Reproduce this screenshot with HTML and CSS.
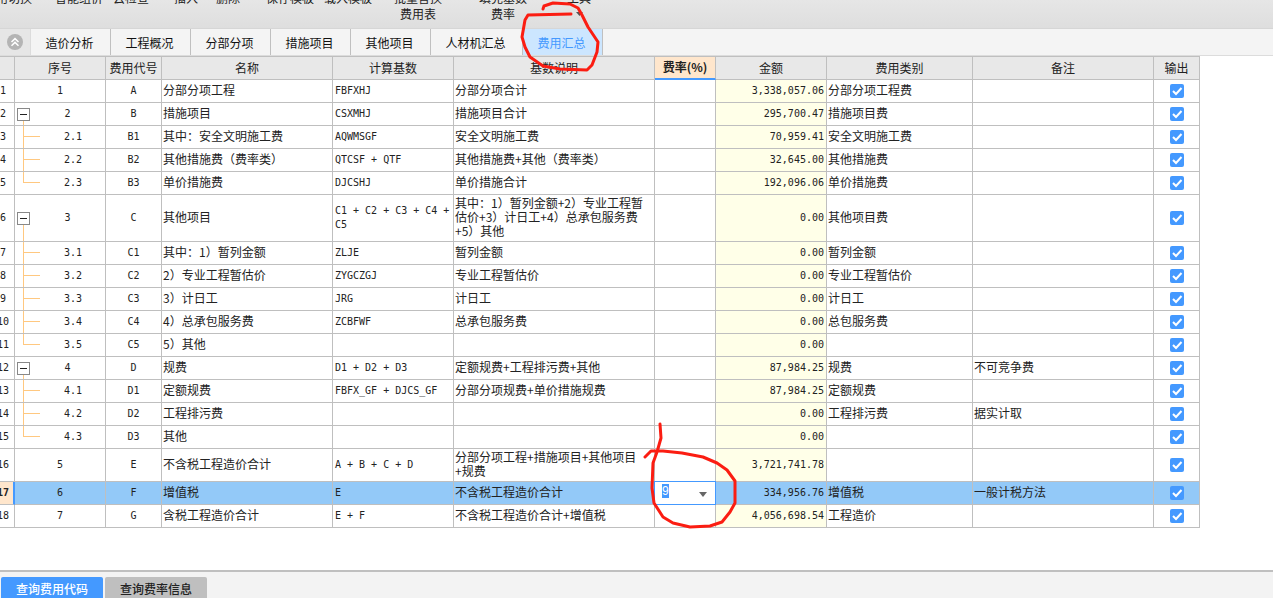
FILE: index.html
```html
<!DOCTYPE html>
<html lang="zh-CN">
<head>
<meta charset="utf-8">
<title>费用汇总</title>
<link rel="stylesheet" href="styles.css">
</head>
<body>
<header class="ribbon">
  <button>费用切换</button>
  <button>智能组价</button>
  <button>云检查</button>
  <button>插入</button>
  <button>删除</button>
  <button>保存模板</button>
  <button>载入模板</button>
  <button>批量替换<br>费用表</button>
  <button>填充基数<br>费率</button>
  <button>工具<br><svg width="7" height="4" viewBox="0 0 7 4"><path d="M0 0h7L3.500 4z" fill="#555"/></svg></button>
</header>
<nav class="tabs">
  <button class="collapse" aria-label="收起">
    <svg width="16" height="16" viewBox="0 0 16 16"><circle cx="8" cy="8" r="8" fill="#b4b4b4"/><path d="M4.500 8L8 4.600 11.500 8M4.500 11.800L8 8.400l3.500 3.400" fill="none" stroke="#fff" stroke-width="1.500"/></svg>
  </button>
  <button>造价分析</button>
  <button>工程概况</button>
  <button>分部分项</button>
  <button>措施项目</button>
  <button>其他项目</button>
  <button class="wide">人材机汇总</button>
  <button class="active">费用汇总</button>
</nav>
<main>
<table>
  <colgroup><col class="w-no"><col class="w-seq"><col class="w-code"><col class="w-name"><col class="w-base"><col class="w-desc"><col class="w-rate"><col class="w-sum"><col class="w-kind"><col class="w-note"><col class="w-out"></colgroup>
  <thead>
    <tr><th></th><th>序号</th><th>费用代号</th><th>名称</th><th>计算基数</th><th>基数说明</th><th class="current">费率(%)</th><th>金额</th><th>费用类别</th><th>备注</th><th>输出</th></tr>
  </thead>
  <tbody>
    <tr><th><span>1</span></th><td>1</td><td>A</td><td>分部分项工程</td><td>FBFXHJ</td><td>分部分项合计</td><td></td><td>3,338,057.06</td><td>分部分项工程费</td><td></td><td><input type="checkbox" aria-label="输出" checked></td></tr>
    <tr><th><span>2</span></th><td class="parent"><div><button aria-label="折叠"></button><span>2</span></div></td><td>B</td><td>措施项目</td><td>CSXMHJ</td><td>措施项目合计</td><td></td><td>295,700.47</td><td>措施项目费</td><td></td><td><input type="checkbox" aria-label="输出" checked></td></tr>
    <tr><th><span>3</span></th><td class="child">2.1</td><td>B1</td><td>其中：安全文明施工费</td><td>AQWMSGF</td><td>安全文明施工费</td><td></td><td>70,959.41</td><td>安全文明施工费</td><td></td><td><input type="checkbox" aria-label="输出" checked></td></tr>
    <tr><th><span>4</span></th><td class="child">2.2</td><td>B2</td><td>其他措施费（费率类）</td><td>QTCSF + QTF</td><td>其他措施费+其他（费率类）</td><td></td><td>32,645.00</td><td>其他措施费</td><td></td><td><input type="checkbox" aria-label="输出" checked></td></tr>
    <tr><th><span>5</span></th><td class="child last">2.3</td><td>B3</td><td>单价措施费</td><td>DJCSHJ</td><td>单价措施合计</td><td></td><td>192,096.06</td><td>单价措施费</td><td></td><td><input type="checkbox" aria-label="输出" checked></td></tr>
    <tr><th><span>6</span></th><td class="parent"><div><button aria-label="折叠"></button><span>3</span></div></td><td>C</td><td>其他项目</td><td>C1 + C2 + C3 + C4 + C5</td><td>其中：1）暂列金额+2）专业工程暂估价+3）计日工+4）总承包服务费+5）其他</td><td></td><td>0.00</td><td>其他项目费</td><td></td><td><input type="checkbox" aria-label="输出" checked></td></tr>
    <tr><th><span>7</span></th><td class="child">3.1</td><td>C1</td><td>其中：1）暂列金额</td><td>ZLJE</td><td>暂列金额</td><td></td><td>0.00</td><td>暂列金额</td><td></td><td><input type="checkbox" aria-label="输出" checked></td></tr>
    <tr><th><span>8</span></th><td class="child">3.2</td><td>C2</td><td>2）专业工程暂估价</td><td>ZYGCZGJ</td><td>专业工程暂估价</td><td></td><td>0.00</td><td>专业工程暂估价</td><td></td><td><input type="checkbox" aria-label="输出" checked></td></tr>
    <tr><th><span>9</span></th><td class="child">3.3</td><td>C3</td><td>3）计日工</td><td>JRG</td><td>计日工</td><td></td><td>0.00</td><td>计日工</td><td></td><td><input type="checkbox" aria-label="输出" checked></td></tr>
    <tr><th><span>10</span></th><td class="child">3.4</td><td>C4</td><td>4）总承包服务费</td><td>ZCBFWF</td><td>总承包服务费</td><td></td><td>0.00</td><td>总包服务费</td><td></td><td><input type="checkbox" aria-label="输出" checked></td></tr>
    <tr><th><span>11</span></th><td class="child last">3.5</td><td>C5</td><td>5）其他</td><td></td><td></td><td></td><td>0.00</td><td></td><td></td><td><input type="checkbox" aria-label="输出" checked></td></tr>
    <tr><th><span>12</span></th><td class="parent"><div><button aria-label="折叠"></button><span>4</span></div></td><td>D</td><td>规费</td><td>D1 + D2 + D3</td><td>定额规费+工程排污费+其他</td><td></td><td>87,984.25</td><td>规费</td><td>不可竞争费</td><td><input type="checkbox" aria-label="输出" checked></td></tr>
    <tr><th><span>13</span></th><td class="child">4.1</td><td>D1</td><td>定额规费</td><td>FBFX_GF + DJCS_GF</td><td>分部分项规费+单价措施规费</td><td></td><td>87,984.25</td><td>定额规费</td><td></td><td><input type="checkbox" aria-label="输出" checked></td></tr>
    <tr><th><span>14</span></th><td class="child">4.2</td><td>D2</td><td>工程排污费</td><td></td><td></td><td></td><td>0.00</td><td>工程排污费</td><td>据实计取</td><td><input type="checkbox" aria-label="输出" checked></td></tr>
    <tr><th><span>15</span></th><td class="child last">4.3</td><td>D3</td><td>其他</td><td></td><td></td><td></td><td>0.00</td><td></td><td></td><td><input type="checkbox" aria-label="输出" checked></td></tr>
    <tr><th><span>16</span></th><td>5</td><td>E</td><td>不含税工程造价合计</td><td>A + B + C + D</td><td>分部分项工程+措施项目+其他项目+规费</td><td></td><td>3,721,741.78</td><td></td><td></td><td><input type="checkbox" aria-label="输出" checked></td></tr>
    <tr class="selected"><th><span>17</span></th><td>6</td><td>F</td><td>增值税</td><td>E</td><td>不含税工程造价合计</td><td class="editing"><div class="combo"><input id="rate" type="text" value="9" aria-label="费率"><button aria-label="选择费率"><svg width="8" height="5" viewBox="0 0 8 5"><path d="M0 0h8L4 5z" fill="#666"/></svg></button></div></td><td>334,956.76</td><td>增值税</td><td>一般计税方法</td><td><input type="checkbox" aria-label="输出" checked></td></tr>
    <tr><th><span>18</span></th><td>7</td><td>G</td><td>含税工程造价合计</td><td>E + F</td><td>不含税工程造价合计+增值税</td><td></td><td>4,056,698.54</td><td>工程造价</td><td></td><td><input type="checkbox" aria-label="输出" checked></td></tr>
  </tbody>
</table>
</main>
<footer class="query">
  <button class="active">查询费用代码</button>
  <button>查询费率信息</button>
</footer>
<svg class="marks" width="760" height="540" viewBox="0 0 760 540" aria-hidden="true">
  <g fill="none" stroke="#fb1d12" stroke-width="3" stroke-linecap="round" stroke-linejoin="round">
    <path d="M543 9L544 6 553 3 570 4 578 8 582 15 588 27 598 42 597 52 592 65 587 70 560 69 543 66 530 57 525 47 522 37 525 20 528 15 571 14"/>
    <path d="M660 424L661 438 657 452 653 463 652 488 654 503 663 517 673 523 690 527 710 526 722 522 730 512 735 503 735 481 727 470 717 463 703 457 682 453 663 451 651 451 645 457"/>
  </g>
</svg>
<script src="script.js"></script>
</body>
</html>
```
FILE: styles.css
```css
* { box-sizing: border-box; }

body {
  margin: 0;
  position: relative;
  min-height: 100vh;
  display: flex;
  flex-direction: column;
  overflow: hidden;
  background: #fff;
  color: #222;
  font: 12px/14px "Noto Sans CJK SC", sans-serif;
}

button {
  margin: 0;
  padding: 0;
  border: 0;
  background: none;
  color: inherit;
  font: inherit;
}

/* Ribbon: only its lower edge stays visible */
.ribbon {
  display: grid;
  grid-template-columns: 71px 58px 61px 42px 50px 58px 70px 85px 88px auto;
  align-content: end;
  justify-items: start;
  align-items: start;
  height: 28px;
  padding-bottom: 6px;
  margin-left: -16px;
  overflow: hidden;
  background: linear-gradient(#e6e6e6, #dedede);
}
.ribbon button { line-height: 16px; white-space: nowrap; }
.ribbon svg { display: block; margin: 6px auto 4px; }

.tabs {
  display: flex;
  height: 28px;
  border-top: 1px solid #d6d6d6;
  border-bottom: 1px solid #dcdcdc;
  background: #f4f4f4;
}
.tabs button {
  width: 80px;
  padding: 2px 2px 0 0;
  border-right: 1px solid #c0c0c0;
  color: #111;
}
.tabs .wide { width: 92px; }
.tabs .collapse {
  width: 31px;
  padding: 0;
  background: #e6e6e6;
  border-color: #dcdcdc;
}
.tabs .collapse svg { display: block; margin: 0 auto; }
.tabs .active { background: #cce6ff; color: #4499ff; }

main { flex: 1; }

table {
  width: 1200px;
  table-layout: fixed;
  border-collapse: separate;
  border-spacing: 0;
  border-top: 1px solid #bfbfbf;
}
.w-no { width: 15px; }
.w-seq { width: 91px; }
.w-code { width: 56px; }
.w-name { width: 171px; }
.w-base { width: 121px; }
.w-desc { width: 201px; }
.w-rate { width: 61px; }
.w-sum { width: 111px; }
.w-kind { width: 146px; }
.w-note { width: 181px; }
.w-out { width: 46px; }

th, td {
  height: 23px;
  padding: 1px 2px 3px 1px;
  border-right: 1px solid #bfbfbf;
  border-bottom: 1px solid #bfbfbf;
  font-weight: normal;
  text-align: left;
}
thead th { padding: 2px; background: #e8e8e8; text-align: center; }
thead .current {
  padding: 0 2px 2px;
  background: #ffe6cc;
  border-bottom: 2px solid #4499ff;
  font-weight: bold;
}

tbody th, td:nth-child(2), td:nth-child(3), td:nth-child(5), td:nth-child(8) {
  padding: 2px;
  font-family: "DejaVu Sans Mono", monospace;
  font-size: 10px;
}
tbody th { padding: 2px 8px 2px 0; }
tbody th span { display: flex; justify-content: center; width: 6px; }
td:nth-child(2), td:nth-child(3), td:nth-child(11) { text-align: center; }
td:nth-child(8) { background: #ffffe8; text-align: right; }
td:nth-child(11) { padding: 2px; }

/* Tree connectors in the sequence column */
td.parent {
  padding: 0 0 0 2px;
  background: linear-gradient(#ffc880, #ffc880) 8px 100% / 1px 50% no-repeat;
}
.parent div { display: flex; align-items: center; }
.parent span { flex: 1; }
.parent button {
  display: grid;
  place-items: center;
  width: 13px;
  height: 13px;
  border: 1px solid #888;
  background: #fff;
}
.parent button::before {
  content: "";
  width: 7px;
  height: 1px;
  background: #222;
}
td.child {
  padding-left: 28px;
  background:
    linear-gradient(#ffc880, #ffc880) 8px 10px / 17px 1px no-repeat,
    linear-gradient(#ffc880, #ffc880) 8px 0 / 1px 100% no-repeat;
}
td.child.last { background-size: 17px 1px, 1px 11px; }

td input[type="checkbox"] {
  appearance: none;
  display: block;
  width: 14px;
  height: 14px;
  margin: 0 auto;
  border-radius: 2px;
  background: #4499ff url("data:image/svg+xml,%3Csvg xmlns='http://www.w3.org/2000/svg' viewBox='0 0 14 14'%3E%3Cpath d='M3 7l3 3 5.500-6' fill='none' stroke='white' stroke-width='2'/%3E%3C/svg%3E") center / 14px;
}

.selected td { background: #93c9f8; }
.selected th {
  background: #ffe6cc;
  border-right: 2px solid #4499ff;
  padding-right: 7px;
  font-weight: bold;
}
td.editing { padding: 0; }
.combo {
  display: flex;
  height: 22px;
  outline: 1px solid #4499ff;
  background: #fff;
}
.combo input {
  flex: 1;
  min-width: 0;
  height: 18px;
  margin: 0;
  padding: 0 0 0 7px;
  border: 0;
  outline: 0;
  background: none;
  color: #222;
  font: 12px/14px "Liberation Sans", sans-serif;
}
.combo input::selection { background: #4499ff; color: #fff; }
.combo button { width: 24px; }
.combo svg { display: block; margin: 2px auto 0; }

.query {
  display: flex;
  gap: 2px;
  height: 28px;
  padding: 5px 1px 0;
  border-top: 2px solid #bfbfbf;
  background: #f3f3f3;
}
.query button {
  width: 102px;
  padding-top: 3px;
  border-radius: 2px 2px 0 0;
  background: #bfbfbf;
  font-weight: 500;
}
.query .active { background: #4499ff; color: #fff; }

/* Hand-drawn marks over the page */
.marks {
  position: absolute;
  top: 0;
  left: 0;
  pointer-events: none;
}
```
FILE: script.js
```js
const rate = document.getElementById("rate");
rate.focus({ preventScroll: true });
rate.select();
```
